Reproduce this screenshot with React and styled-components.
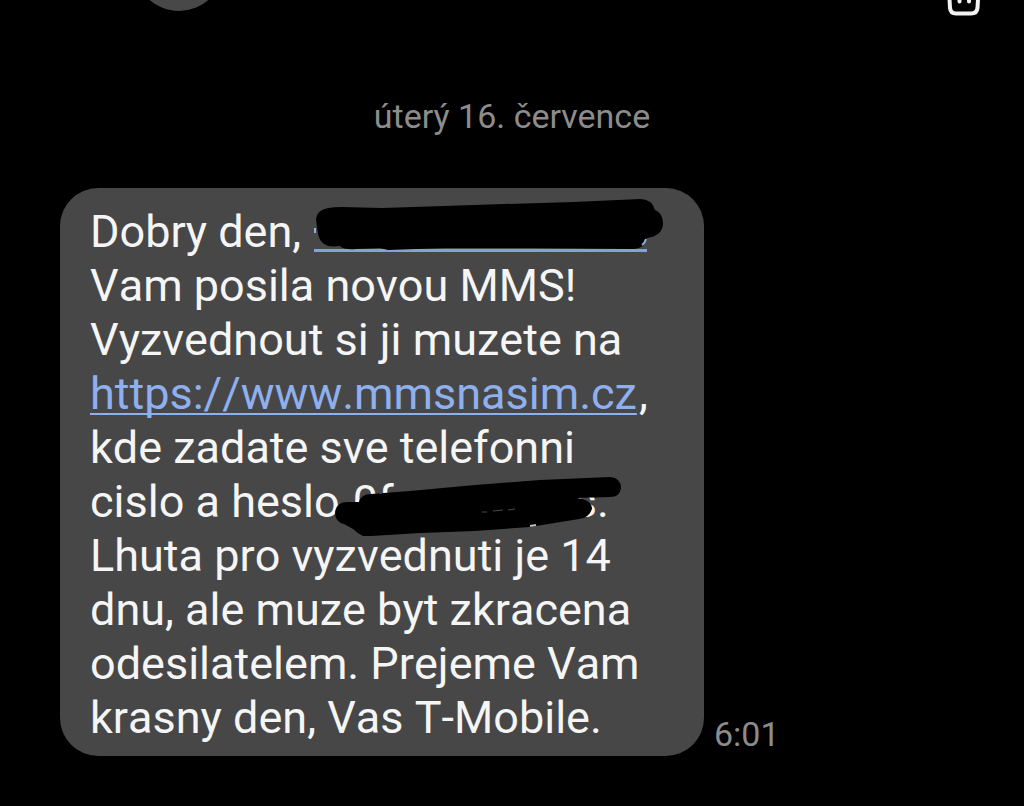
import styled, { createGlobalStyle } from "styled-components";

const App = () => {
  return (
    <Screen>
      <GlobalStyle />
      <TopBar>
        <Avatar />
        <DeleteButton type="button" aria-label="Smazat">
          <TrashIcon />
        </DeleteButton>
      </TopBar>
      <Conversation>
        <DateLabel>úterý 16. července</DateLabel>
        <MessageRow>
          <Bubble>
            <Line>
              Dobry den,{" "}
              <HiddenNumber href="#sender" aria-label="Skryté číslo">
                <NumberScribble />
              </HiddenNumber>
            </Line>
            <Line>Vam posila novou MMS!</Line>
            <Line>Vyzvednout si ji muzete na</Line>
            <Line>
              <MessageLink href="https://www.mmsnasim.cz">
                https://www.mmsnasim.cz
              </MessageLink>,
            </Line>
            <Line>kde zadate sve telefonni</Line>
            <Line>
              cislo a heslo{" "}
              <HiddenPassword>
                <span>0f</span>
                <span>s.</span>
                <PasswordScribble />
              </HiddenPassword>
            </Line>
            <Line>Lhuta pro vyzvednuti je 14</Line>
            <Line>dnu, ale muze byt zkracena</Line>
            <Line>odesilatelem. Prejeme Vam</Line>
            <Line>krasny den, Vas T-Mobile.</Line>
          </Bubble>
          <Time>6:01</Time>
        </MessageRow>
      </Conversation>
    </Screen>
  );
};

const TrashIcon = () => (
  <svg width="36" height="40" viewBox="0 0 36 40" fill="none">
    <path
      d="M3 14L4 32Q4.500 37.500 10 37.500H25Q31 37.500 31.500 32L32.500 14"
      stroke="#f2f2f2"
      strokeWidth="4"
    />
    <path
      d="M13.500 14V25.500M23 14V25.500"
      stroke="#f2f2f2"
      strokeWidth="4"
      strokeLinecap="round"
    />
  </svg>
);

const NumberScribble = () => (
  <Scribble width="350" height="52" viewBox="0 0 350 52">
    <path
      d="M14 9Q20 8 28 8L68 9L130 7L190 5L260 3L326 0Q338 0 341 11Q349 14 349 25Q348 37 333 39Q331 49 320 50L220 49L130 49L74 51L66 49L42 50Q30 51 26 47Q6 50 4 34L3 28L2 20Q3 11 14 9Z"
      fill="#000"
    />
    <path d="M328 46Q331 44 332 40" stroke="#8fafe8" strokeWidth="2" fill="none" />
    <path d="M1 29V34" stroke="#8fafe8" strokeWidth="2" />
  </Scribble>
);

const PasswordScribble = () => (
  <Scribble width="288" height="62" viewBox="0 0 288 62">
    <path
      d="M12 25L24 25Q26 17 36 17L75 14L140 8L205 3L275 0Q286 1 286 11Q285 20 275 20L242 21Q257 23 257 32Q254 41 244 42L195 50L140 54L85 56L36 59L28 59Q23 57 18 52L9 47Q0 45 0 35Q2 25 12 25Z"
      fill="#000"
    />
    <path
      d="M147 35H152M158 34L168 33M173 33L180 32"
      stroke="#4b4b4b"
      strokeWidth="1"
    />
    <path d="M195 49L201 48" stroke="#bbb" strokeWidth="2" />
  </Scribble>
);

const GlobalStyle = createGlobalStyle`
  * {
    box-sizing: border-box;
  }
  body {
    margin: 0;
    background: #000;
    font-family: Roboto, "Noto Sans", sans-serif;
  }
`;

const Screen = styled.div`
  min-height: 100vh;
  background: #000;
`;

const TopBar = styled.header`
  display: flex;
  justify-content: space-between;
  align-items: flex-end;
  height: 16px;
  padding: 0 42px 0 134px;
  overflow: hidden;
`;

const Avatar = styled.div`
  width: 90px;
  height: 90px;
  margin-bottom: 5px;
  border-radius: 50%;
  background: #484848;
`;

const DeleteButton = styled.button`
  display: flex;
  padding: 0;
  border: 0;
  background: none;
`;

const Conversation = styled.main`
  padding: 80px 60px 0;
`;

const DateLabel = styled.p`
  margin: 0 0 52px;
  color: #8c8c8c;
  font-size: 34px;
  line-height: 40px;
  text-align: center;
`;

const MessageRow = styled.div`
  display: flex;
  align-items: flex-end;
  gap: 10px;
`;

const Bubble = styled.div`
  width: 100%;
  max-width: 644px;
  padding: 17px 30px 11px;
  border-radius: 38px;
  background: #474747;
  color: #f5f5f5;
  font-size: 45px;
  line-height: 54px;
  font-kerning: none;
`;

const Line = styled.div`
  display: flex;
  gap: 2px;
  white-space: pre;
`;

const MessageLink = styled.a`
  color: #8fb0ee;
  text-decoration: underline;
  text-decoration-thickness: 2px;
  text-underline-offset: 4px;
  text-decoration-skip-ink: none;
`;

const HiddenNumber = styled.a`
  position: relative;
  width: 333px;
  height: 47px;
  border-bottom: 3px solid #86a2d4;
`;

const HiddenPassword = styled.span`
  position: relative;
  display: flex;
  justify-content: space-between;
  width: 256px;
`;

const Scribble = styled.svg`
  position: absolute;
  top: -6px;
  left: 0;

  ${HiddenPassword} & {
    top: 2px;
    left: -18px;
  }
`;

const Time = styled.time`
  padding-bottom: 2px;
  color: #8c8c8c;
  font-size: 34px;
  line-height: 40px;
`;

export default App;
